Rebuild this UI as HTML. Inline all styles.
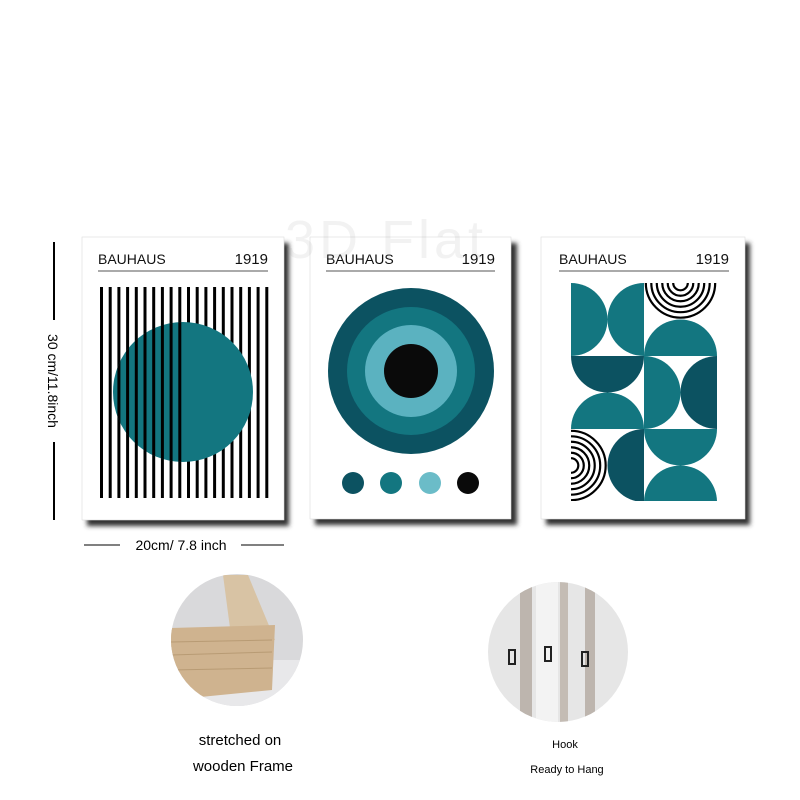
<!DOCTYPE html>
<html><head><meta charset="utf-8"><style>
html,body{margin:0;padding:0;background:#fff;width:800px;height:800px;overflow:hidden;font-family:"Liberation Sans",sans-serif}
</style></head><body>
<svg width="800" height="800" viewBox="0 0 800 800" xmlns="http://www.w3.org/2000/svg" font-family="Liberation Sans, sans-serif">
<defs>
<filter id="sh" x="-10%" y="-10%" width="130%" height="130%"><feGaussianBlur stdDeviation="2.5"/></filter>
<clipPath id="c1"><circle cx="183" cy="392" r="70"/></clipPath>
<clipPath id="g3"><rect x="571" y="283" width="146" height="218"/></clipPath>
<clipPath id="p1"><circle cx="237" cy="640" r="66"/></clipPath>
<clipPath id="p2"><circle cx="558" cy="652" r="70"/></clipPath>
</defs>
<!-- shadows -->
<rect x="87" y="243" width="202" height="283" fill="#333" filter="url(#sh)"/>
<rect x="315" y="243" width="202" height="282" fill="#333" filter="url(#sh)"/>
<rect x="546" y="243" width="204" height="282" fill="#333" filter="url(#sh)"/>
<!-- poster 1 -->
<rect x="82" y="237" width="202" height="283" fill="#fff" stroke="#ddd" stroke-width="0.6"/>
<text x="98" y="264" font-size="14" fill="#111">BAUHAUS</text>
<text x="268" y="264" font-size="15" fill="#111" text-anchor="end">1919</text>
<line x1="98" y1="271" x2="268" y2="271" stroke="#555" stroke-width="1"/>
<g stroke="#000" stroke-width="3">
<line x1="101.5" y1="287" x2="101.5" y2="498"/><line x1="110.2" y1="287" x2="110.2" y2="498"/><line x1="118.9" y1="287" x2="118.9" y2="498"/><line x1="127.6" y1="287" x2="127.6" y2="498"/><line x1="136.3" y1="287" x2="136.3" y2="498"/><line x1="145" y1="287" x2="145" y2="498"/><line x1="153.7" y1="287" x2="153.7" y2="498"/><line x1="162.4" y1="287" x2="162.4" y2="498"/><line x1="171.1" y1="287" x2="171.1" y2="498"/><line x1="179.8" y1="287" x2="179.8" y2="498"/><line x1="188.5" y1="287" x2="188.5" y2="498"/><line x1="197.2" y1="287" x2="197.2" y2="498"/><line x1="205.9" y1="287" x2="205.9" y2="498"/><line x1="214.6" y1="287" x2="214.6" y2="498"/><line x1="223.3" y1="287" x2="223.3" y2="498"/><line x1="232" y1="287" x2="232" y2="498"/><line x1="240.7" y1="287" x2="240.7" y2="498"/><line x1="249.4" y1="287" x2="249.4" y2="498"/><line x1="258.1" y1="287" x2="258.1" y2="498"/><line x1="266.8" y1="287" x2="266.8" y2="498"/>
</g>
<path d="M183 322 A70 70 0 0 1 183 462 Z" fill="#137680"/>
<g clip-path="url(#c1)"><rect x="113" y="322" width="70" height="140" fill="#137680"/>
<g stroke="#000" stroke-width="3"><line x1="118.9" y1="287" x2="118.9" y2="498"/><line x1="127.6" y1="287" x2="127.6" y2="498"/><line x1="136.3" y1="287" x2="136.3" y2="498"/><line x1="145" y1="287" x2="145" y2="498"/><line x1="153.7" y1="287" x2="153.7" y2="498"/><line x1="162.4" y1="287" x2="162.4" y2="498"/><line x1="171.1" y1="287" x2="171.1" y2="498"/><line x1="179.8" y1="287" x2="179.8" y2="498"/></g></g>
<!-- poster 2 -->
<rect x="310" y="237" width="201" height="282" fill="#fff" stroke="#ddd" stroke-width="0.6"/>
<text x="326" y="264" font-size="14" fill="#111">BAUHAUS</text>
<text x="495" y="264" font-size="15" fill="#111" text-anchor="end">1919</text>
<line x1="326" y1="271" x2="495" y2="271" stroke="#555" stroke-width="1"/>
<circle cx="411" cy="371" r="83" fill="#0c5261"/>
<circle cx="411" cy="371" r="64" fill="#137680"/>
<circle cx="411" cy="371" r="46" fill="#5bb2c0"/>
<circle cx="411" cy="371" r="27" fill="#0a0a0a"/>
<circle cx="353" cy="483" r="11" fill="#0c5261"/>
<circle cx="391" cy="483" r="11" fill="#137680"/>
<circle cx="430" cy="483" r="11" fill="#6bbcc8"/>
<circle cx="468" cy="483" r="11" fill="#0a0a0a"/>
<!-- poster 3 -->
<rect x="541" y="237" width="204" height="282" fill="#fff" stroke="#ddd" stroke-width="0.6"/>
<text x="559" y="264" font-size="14" fill="#111">BAUHAUS</text>
<text x="729" y="264" font-size="15" fill="#111" text-anchor="end">1919</text>
<line x1="559" y1="271" x2="729" y2="271" stroke="#555" stroke-width="1"/>
<g clip-path="url(#g3)">
<g transform="translate(571,283) scale(36.5)">
<path d="M0 0 A1 1 0 0 1 0 2 Z" fill="#137680"/>
<path d="M2 0 A1 1 0 0 0 2 2 Z" fill="#137680"/>
<path d="M0 2 A1 1 0 0 0 2 2 Z" fill="#0c5261"/>
<path d="M0 4 A1 1 0 0 1 2 4 Z" fill="#137680"/>
<path d="M2 4 A1 1 0 0 0 2 6 Z" fill="#0c5261"/>
<path d="M2 2 A1 1 0 0 1 4 2 Z" fill="#137680"/>
<path d="M2 2 A1 1 0 0 1 2 4 Z" fill="#137680"/>
<path d="M4 2 A1 1 0 0 0 4 4 Z" fill="#0c5261"/>
<path d="M2 4 A1 1 0 0 0 4 4 Z" fill="#137680"/>
<path d="M2 6 A1 1 0 0 1 4 6 Z" fill="#137680"/>
<g fill="none" stroke="#000" stroke-width="0.06">
<circle cx="3" cy="0" r="0.95"/><circle cx="3" cy="0" r="0.80"/><circle cx="3" cy="0" r="0.65"/><circle cx="3" cy="0" r="0.50"/><circle cx="3" cy="0" r="0.35"/><circle cx="3" cy="0" r="0.20"/>
<circle cx="0" cy="5" r="0.95"/><circle cx="0" cy="5" r="0.80"/><circle cx="0" cy="5" r="0.65"/><circle cx="0" cy="5" r="0.50"/><circle cx="0" cy="5" r="0.35"/><circle cx="0" cy="5" r="0.20"/>
</g>
</g>
</g>
<!-- watermark -->
<text x="285" y="258" font-size="54" fill="#999" opacity="0.12" letter-spacing="4">3D Flat</text>
<!-- dimensions -->
<line x1="54" y1="242" x2="54" y2="320" stroke="#000" stroke-width="2"/>
<line x1="54" y1="442" x2="54" y2="520" stroke="#000" stroke-width="2"/>
<text transform="translate(48,381) rotate(90)" font-size="14" text-anchor="middle" fill="#000">30 cm/11.8inch</text>
<line x1="84" y1="545" x2="120" y2="545" stroke="#000" stroke-width="1"/>
<line x1="241" y1="545" x2="284" y2="545" stroke="#000" stroke-width="1"/>
<text x="181" y="550" font-size="14" text-anchor="middle" fill="#000">20cm/ 7.8 inch</text>
<!-- photo 1 -->
<g clip-path="url(#p1)">
<rect x="170" y="573" width="134" height="134" fill="#d9d9db"/>
<rect x="170" y="660" width="134" height="50" fill="#e8e8ea"/>
<path d="M223 575 L248 575 L275 640 L170 650 L170 630 L230 628 Z" fill="#d8c3a4"/>
<path d="M170 628 L275 625 L272 690 L170 700 Z" fill="#cfb38f"/>
<path d="M170 642 L272 640 M170 655 L272 652 M170 670 L272 668" stroke="#b89b74" stroke-width="1"/>
</g>
<!-- photo 2 -->
<g clip-path="url(#p2)">
<rect x="488" y="582" width="140" height="140" fill="#e6e6e6"/>
<rect x="520" y="582" width="12" height="140" fill="#bdb5ae"/>
<rect x="560" y="582" width="8" height="140" fill="#c4bcb4"/>
<rect x="585" y="582" width="10" height="140" fill="#bdb5ae"/>
<rect x="536" y="582" width="22" height="140" fill="#f3f3f3"/>
<rect x="509" y="650" width="6" height="14" fill="none" stroke="#222" stroke-width="2"/>
<rect x="545" y="647" width="6" height="14" fill="none" stroke="#222" stroke-width="2"/>
<rect x="582" y="652" width="6" height="14" fill="none" stroke="#222" stroke-width="2"/>
</g>
<text x="240" y="745" font-size="15" text-anchor="middle" fill="#000">stretched on</text>
<text x="243" y="771" font-size="15" text-anchor="middle" fill="#000">wooden Frame</text>
<text x="565" y="748" font-size="11" text-anchor="middle" fill="#000">Hook</text>
<text x="567" y="773" font-size="11" text-anchor="middle" fill="#000">Ready to Hang</text>
</svg>
</body></html>
